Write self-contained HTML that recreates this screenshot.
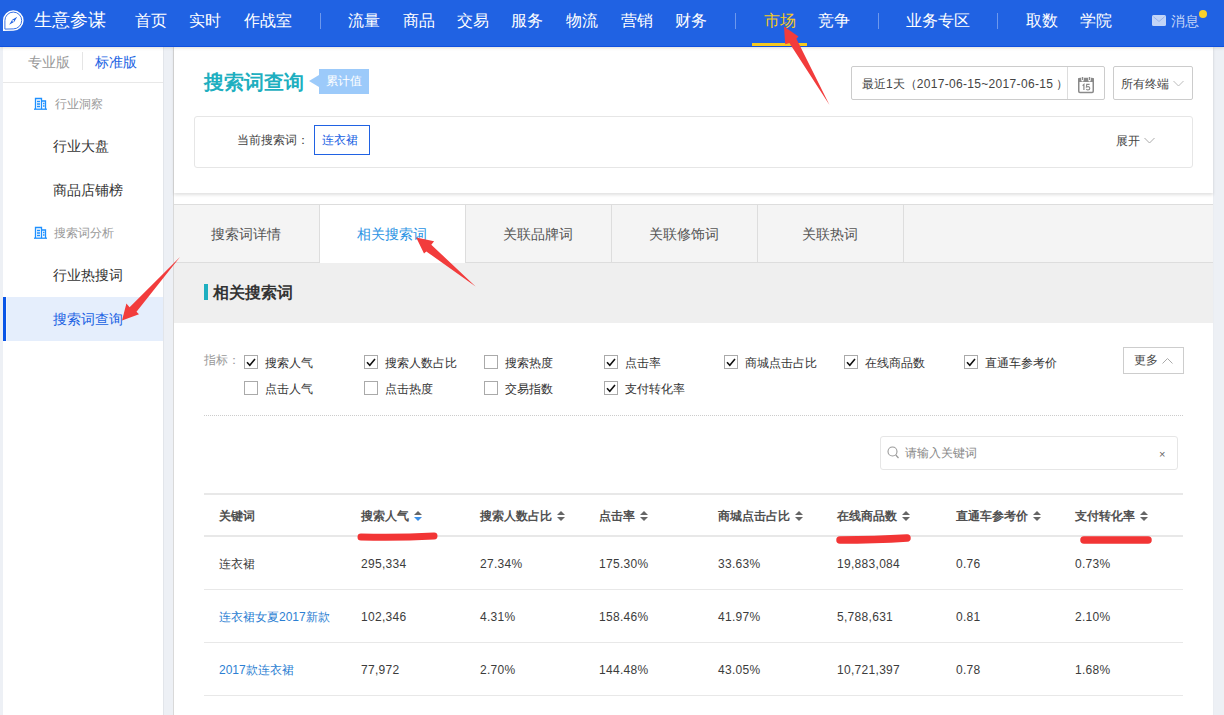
<!DOCTYPE html>
<html><head><meta charset="utf-8">
<style>
*{margin:0;padding:0;box-sizing:border-box}
html,body{width:1224px;height:715px;overflow:hidden;background:#fff;font-family:"Liberation Sans",sans-serif;color:#333}
.abs{position:absolute;z-index:3}
#hdr{position:absolute;left:0;top:0;width:1224px;height:47px;background:#2062e3;border-bottom:1px solid #0f50df;box-shadow:0 1px 3px rgba(80,70,40,.18);z-index:2}
.nav{position:absolute;top:11px;font-size:16px;color:#fff;line-height:20px;white-space:nowrap;font-weight:500;z-index:3}
.sep{position:absolute;top:13px;width:1px;height:16px;background:rgba(255,255,255,.35);z-index:3}
#side{position:absolute;left:0;top:46px;width:163px;height:669px;background:#fff;border-left:3px solid #edf0f5}
#gap{position:absolute;left:163px;top:46px;width:11px;height:669px;background:#edf0f5;border-left:1px solid #e2e5ea;border-right:1px solid #d9d9d9}
#rgap{position:absolute;left:1213px;top:46px;width:11px;height:669px;background:#edf0f5;border-left:1px solid #eaedf2}
.t12{font-size:12px;line-height:14px}
.t14{font-size:14px;line-height:16px}
.cb{position:absolute;width:14px;height:14px;border:1px solid #aaa;background:#fff}
.cb svg{position:absolute;left:-1px;top:-1px}
.cbl{position:absolute;font-size:12px;line-height:14px;color:#333}
.th{position:absolute;top:509px;font-size:12px;line-height:14px;font-weight:bold;color:#505050}
.td{position:absolute;font-size:12px;line-height:14px;color:#3c3c3c;letter-spacing:0.3px}
.sort{display:inline-block;vertical-align:top;margin-left:5px;width:8px;height:10px;position:relative;top:2px}
.sort::before{content:"";position:absolute;left:0;top:0;border:4px solid transparent;border-bottom:4.5px solid #666;border-top:0}
.sort::after{content:"";position:absolute;left:0;bottom:0;border:4px solid transparent;border-top:4.5px solid #666;border-bottom:0}
.sort.blue::after{border-top-color:#3b8fe8}
.hl{position:absolute;height:1px;background:#e8e8e8}
</style></head><body>
<div id="hdr"></div>
<!-- logo -->
<svg class="abs" style="left:0;top:0" width="30" height="40" viewBox="0 0 30 40">
<path d="M3 31 L3 20.5 A10.3 10.3 0 1 1 13.3 30.8 Z" fill="#fff"/>
<path d="M4.9 29.1 L4.9 20.5 A8.4 8.4 0 1 1 13.3 28.9 Z" fill="none" stroke="#2062e3" stroke-width="0.9"/>
<path d="M17.2 16.8 L14.3 21.8 L9.2 24.8 L12.2 19.8 Z" fill="#2062e3"/>
<circle cx="13.2" cy="20.8" r="0.9" fill="#fff"/>
</svg>
<div class="nav" style="left:34px;font-size:18px;top:10px">生意参谋</div>
<div class="nav" style="left:135px">首页</div>
<div class="nav" style="left:189px">实时</div>
<div class="nav" style="left:244px">作战室</div>
<div class="sep" style="left:320px"></div>
<div class="nav" style="left:348px">流量</div>
<div class="nav" style="left:403px">商品</div>
<div class="nav" style="left:457px">交易</div>
<div class="nav" style="left:511px">服务</div>
<div class="nav" style="left:566px">物流</div>
<div class="nav" style="left:621px">营销</div>
<div class="nav" style="left:675px">财务</div>
<div class="sep" style="left:735px"></div>
<div class="nav" style="left:764px;color:#f5c81f">市场</div>
<div class="abs" style="left:752px;top:43px;width:55px;height:3px;background:#f5c81f"></div>
<div class="nav" style="left:818px">竞争</div>
<div class="sep" style="left:878px"></div>
<div class="nav" style="left:906px">业务专区</div>
<div class="sep" style="left:997px"></div>
<div class="nav" style="left:1026px">取数</div>
<div class="nav" style="left:1080px">学院</div>
<svg class="abs" style="left:1152px;top:15px" width="14" height="11" viewBox="0 0 14 11"><rect x="0" y="0" width="14" height="11" rx="1.5" fill="#c2d4f7"/><path d="M1.5 1.8 L7 6.5 L12.5 1.8" fill="none" stroke="#98b3ee" stroke-width="1"/></svg>
<div class="nav" style="left:1171px;font-size:14px;top:11px;color:#c8d8f8">消息</div>
<div class="abs" style="left:1199px;top:10px;width:8px;height:8px;border-radius:50%;background:#f8d12a"></div>

<div id="side"></div>
<div id="gap"></div>
<div id="rgap"></div>

<!-- sidebar -->
<div class="abs t14" style="left:28px;top:54px;color:#999">专业版</div>
<div class="abs" style="left:82px;top:52px;width:1px;height:18px;background:#e5e5e5"></div>
<div class="abs t14" style="left:95px;top:54px;color:#2062e3">标准版</div>
<div class="abs" style="left:3px;top:82px;width:160px;height:1px;background:#e8e8e8"></div>
<div class="abs t12" style="left:55px;top:97px;color:#999">行业洞察</div>
<div class="abs t14" style="left:53px;top:138px;color:#333">行业大盘</div>
<div class="abs t14" style="left:53px;top:182px;color:#333">商品店铺榜</div>
<div class="abs t12" style="left:54px;top:226px;color:#999">搜索词分析</div>
<div class="abs t14" style="left:53px;top:267px;color:#333">行业热搜词</div>
<div class="abs" style="left:3px;top:297px;width:160px;height:44px;background:#e5eefc;border-left:4px solid #f2f6fd"></div><div class="abs" style="left:3px;top:297px;width:3px;height:44px;background:#0a55e6"></div>
<div class="abs t14" style="left:53px;top:311px;color:#2062e3">搜索词查询</div>

<!-- top panel -->
<div class="abs" style="left:174px;top:46px;width:1039px;height:147px;background:#fff;box-shadow:0 2px 3px rgba(0,0,0,.12);z-index:1"></div>
<div class="abs" style="left:204px;top:70px;font-size:20px;line-height:24px;font-weight:bold;color:#1eafc0">搜索词查询</div>
<div class="abs" style="left:309px;top:75px;width:0;height:0;border:6px solid transparent;border-right:10px solid #9ccafa;border-left:0"></div>
<div class="abs t12" style="left:319px;top:69px;width:50px;height:25px;background:#9ccafa;color:#fff;text-align:center;line-height:25px">累计值</div>
<div class="abs" style="left:851px;top:66px;width:254px;height:34px;border:1px solid #ccc;border-radius:2px"></div>
<div class="abs" style="left:1067px;top:67px;width:1px;height:32px;background:#ddd"></div>
<div class="abs t12" style="left:862px;top:77px;color:#444;white-space:nowrap">最近1天（<span style="letter-spacing:0.32px">2017-06-15~2017-06-15</span><span style="margin-left:3px">）</span></div>
<div class="abs" style="left:1113px;top:66px;width:80px;height:34px;border:1px solid #ccc;border-radius:2px"></div>
<div class="abs t12" style="left:1121px;top:77px;color:#444">所有终端</div>
<div class="abs" style="left:194px;top:116px;width:999px;height:52px;border:1px solid #e6e6e6;border-radius:3px"></div>
<div class="abs t12" style="left:237px;top:133px;color:#444">当前搜索词：</div>
<div class="abs t12" style="left:314px;top:125px;width:56px;height:30px;border:1px solid #2062e3;color:#2062e3;text-align:center;line-height:28px;padding-right:4px">连衣裙</div>
<div class="abs t12" style="left:1116px;top:134px;color:#444">展开</div>

<!-- tabs -->
<div class="abs" style="left:174px;top:204px;width:1039px;height:59px;background:#f4f4f4;border-top:1px solid #ddd;border-bottom:1px solid #ddd"></div>
<div class="abs" style="left:319px;top:204px;width:1px;height:59px;background:#ddd"></div>
<div class="abs" style="left:320px;top:205px;width:145px;height:58px;background:#fff"></div>
<div class="abs" style="left:465px;top:204px;width:1px;height:59px;background:#ddd"></div>
<div class="abs" style="left:611px;top:204px;width:1px;height:59px;background:#ddd"></div>
<div class="abs" style="left:757px;top:204px;width:1px;height:59px;background:#ddd"></div>
<div class="abs" style="left:903px;top:204px;width:1px;height:59px;background:#ddd"></div>
<div class="abs t14" style="left:211px;top:226px;color:#555">搜索词详情</div>
<div class="abs t14" style="left:357px;top:226px;color:#2a93e3">相关搜索词</div>
<div class="abs t14" style="left:503px;top:226px;color:#555">关联品牌词</div>
<div class="abs t14" style="left:649px;top:226px;color:#555">关联修饰词</div>
<div class="abs t14" style="left:802px;top:226px;color:#555">关联热词</div>

<div class="abs" style="left:174px;top:263px;width:1039px;height:60px;background:#efefef"></div>
<div class="abs" style="left:204px;top:284px;width:4px;height:16px;background:#1eafc0"></div>
<div class="abs" style="left:213px;top:283px;font-size:16px;line-height:19px;font-weight:bold;color:#333">相关搜索词</div>

<!-- filters -->
<div class="abs t12" style="left:204px;top:353px;color:#999">指标：</div>
<div class="cb" style="left:244px;top:355px"><svg width="14" height="14" viewBox="0 0 14 14"><path d="M3 7.2 L5.8 10.2 L11 4" fill="none" stroke="#111" stroke-width="1.6"/></svg></div><div class="cbl" style="left:265px;top:356px">搜索人气</div>
<div class="cb" style="left:364px;top:355px"><svg width="14" height="14" viewBox="0 0 14 14"><path d="M3 7.2 L5.8 10.2 L11 4" fill="none" stroke="#111" stroke-width="1.6"/></svg></div><div class="cbl" style="left:385px;top:356px">搜索人数占比</div>
<div class="cb" style="left:484px;top:355px"></div><div class="cbl" style="left:505px;top:356px">搜索热度</div>
<div class="cb" style="left:604px;top:355px"><svg width="14" height="14" viewBox="0 0 14 14"><path d="M3 7.2 L5.8 10.2 L11 4" fill="none" stroke="#111" stroke-width="1.6"/></svg></div><div class="cbl" style="left:625px;top:356px">点击率</div>
<div class="cb" style="left:724px;top:355px"><svg width="14" height="14" viewBox="0 0 14 14"><path d="M3 7.2 L5.8 10.2 L11 4" fill="none" stroke="#111" stroke-width="1.6"/></svg></div><div class="cbl" style="left:745px;top:356px">商城点击占比</div>
<div class="cb" style="left:844px;top:355px"><svg width="14" height="14" viewBox="0 0 14 14"><path d="M3 7.2 L5.8 10.2 L11 4" fill="none" stroke="#111" stroke-width="1.6"/></svg></div><div class="cbl" style="left:865px;top:356px">在线商品数</div>
<div class="cb" style="left:964px;top:355px"><svg width="14" height="14" viewBox="0 0 14 14"><path d="M3 7.2 L5.8 10.2 L11 4" fill="none" stroke="#111" stroke-width="1.6"/></svg></div><div class="cbl" style="left:985px;top:356px">直通车参考价</div>
<div class="cb" style="left:244px;top:381px"></div><div class="cbl" style="left:265px;top:382px">点击人气</div>
<div class="cb" style="left:364px;top:381px"></div><div class="cbl" style="left:385px;top:382px">点击热度</div>
<div class="cb" style="left:484px;top:381px"></div><div class="cbl" style="left:505px;top:382px">交易指数</div>
<div class="cb" style="left:604px;top:381px"><svg width="14" height="14" viewBox="0 0 14 14"><path d="M3 7.2 L5.8 10.2 L11 4" fill="none" stroke="#111" stroke-width="1.6"/></svg></div><div class="cbl" style="left:625px;top:382px">支付转化率</div>
<div class="abs t12" style="left:1123px;top:347px;width:61px;height:27px;border:1px solid #cdcdcd;line-height:24px;padding-left:10px;color:#444">更多</div>
<div class="abs" style="left:204px;top:415px;width:979px;height:0;border-top:1px dotted #ccc"></div>

<div class="abs" style="left:880px;top:436px;width:298px;height:34px;border:1px solid #e6e6e6;border-radius:3px"></div>
<div class="abs t12" style="left:905px;top:446px;color:#888">请输入关键词</div>
<div class="abs t12" style="left:1159px;top:447px;color:#666;font-size:11px">×</div>

<!-- table -->
<div class="abs" style="left:204px;top:493px;width:979px;height:2px;background:#e8e8e8"></div>
<div class="abs" style="left:204px;top:535px;width:979px;height:2px;background:#e8e8e8"></div>
<div class="hl" style="left:204px;top:589px;width:979px"></div>
<div class="hl" style="left:204px;top:642px;width:979px"></div>
<div class="hl" style="left:204px;top:695px;width:979px"></div>
<div class="th" style="left:219px">关键词</div>
<div class="th" style="left:361px">搜索人气<span class="sort blue"></span></div>
<div class="th" style="left:480px">搜索人数占比<span class="sort"></span></div>
<div class="th" style="left:599px">点击率<span class="sort"></span></div>
<div class="th" style="left:718px">商城点击占比<span class="sort"></span></div>
<div class="th" style="left:837px">在线商品数<span class="sort"></span></div>
<div class="th" style="left:956px">直通车参考价<span class="sort"></span></div>
<div class="th" style="left:1075px">支付转化率<span class="sort"></span></div>

<div class="td" style="left:219px;top:557px;letter-spacing:0">连衣裙</div>
<div class="td" style="left:361px;top:557px">295,334</div>
<div class="td" style="left:480px;top:557px">27.34%</div>
<div class="td" style="left:599px;top:557px">175.30%</div>
<div class="td" style="left:718px;top:557px">33.63%</div>
<div class="td" style="left:837px;top:557px">19,883,084</div>
<div class="td" style="left:956px;top:557px">0.76</div>
<div class="td" style="left:1075px;top:557px">0.73%</div>

<div class="td" style="left:219px;top:610px;color:#2d7fd3;letter-spacing:0">连衣裙女夏2017新款</div>
<div class="td" style="left:361px;top:610px">102,346</div>
<div class="td" style="left:480px;top:610px">4.31%</div>
<div class="td" style="left:599px;top:610px">158.46%</div>
<div class="td" style="left:718px;top:610px">41.97%</div>
<div class="td" style="left:837px;top:610px">5,788,631</div>
<div class="td" style="left:956px;top:610px">0.81</div>
<div class="td" style="left:1075px;top:610px">2.10%</div>

<div class="td" style="left:219px;top:663px;color:#2d7fd3;letter-spacing:0">2017款连衣裙</div>
<div class="td" style="left:361px;top:663px">77,972</div>
<div class="td" style="left:480px;top:663px">2.70%</div>
<div class="td" style="left:599px;top:663px">144.48%</div>
<div class="td" style="left:718px;top:663px">43.05%</div>
<div class="td" style="left:837px;top:663px">10,721,397</div>
<div class="td" style="left:956px;top:663px">0.78</div>
<div class="td" style="left:1075px;top:663px">1.68%</div>


<!-- icons -->
<svg class="abs" style="left:34px;top:97px" width="14" height="13" viewBox="0 0 14 13"><g fill="none" stroke="#1e90ff" stroke-width="1.3"><path d="M1.5 12 V1.5 H7.5 V12"/><path d="M7.5 4 H11.5 V12"/><path d="M0 12.2 H13"/><path d="M3 4.5 H6 M3 7 H6 M3 9.5 H6 M9 6.5 H10.5 M9 9 H10.5"/></g></svg>
<svg class="abs" style="left:34px;top:226px" width="14" height="13" viewBox="0 0 14 13"><g fill="none" stroke="#1e90ff" stroke-width="1.3"><path d="M1.5 12 V1.5 H7.5 V12"/><path d="M7.5 4 H11.5 V12"/><path d="M0 12.2 H13"/><path d="M3 4.5 H6 M3 7 H6 M3 9.5 H6 M9 6.5 H10.5 M9 9 H10.5"/></g></svg>
<svg class="abs" style="left:1078px;top:77px" width="16" height="17" viewBox="0 0 16 17"><rect x="0.75" y="1.5" width="14.5" height="14" rx="1.2" fill="none" stroke="#8a8a8a" stroke-width="1.5"/><rect x="0" y="1" width="16" height="4" rx="1" fill="#8a8a8a"/><path d="M3.3 1 V3.2 A1.2 1.2 0 0 0 5.7 3.2 V1 Z M10.3 1 V3.2 A1.2 1.2 0 0 0 12.7 3.2 V1 Z" fill="#fff"/><path d="M4.5 0 V3 M11.5 0 V3" stroke="#8a8a8a" stroke-width="1"/><path d="M4.6 8.6 L5.9 7.4 V13" fill="none" stroke="#8a8a8a" stroke-width="1.2"/><path d="M11.6 7.4 H8.7 L8.4 10.1 Q9.4 9.5 10.3 9.6 Q11.8 9.8 11.8 11.3 Q11.8 13 10 13 Q8.9 13 8.3 12.2" fill="none" stroke="#8a8a8a" stroke-width="1.1"/></svg>
<svg class="abs" style="left:1173px;top:80px" width="11" height="8" viewBox="0 0 11 8"><path d="M0.5 1 L5.5 6 L10.5 1" fill="none" stroke="#bbb" stroke-width="1"/></svg>
<svg class="abs" style="left:1144px;top:137px" width="11" height="8" viewBox="0 0 11 8"><path d="M0.5 1 L5.5 6 L10.5 1" fill="none" stroke="#aaa" stroke-width="1"/></svg>
<svg class="abs" style="left:1162px;top:357px" width="11" height="8" viewBox="0 0 11 8"><path d="M0.5 6.5 L5.5 1.5 L10.5 6.5" fill="none" stroke="#aaa" stroke-width="1"/></svg>
<svg class="abs" style="left:887px;top:446px" width="13" height="14" viewBox="0 0 13 14"><circle cx="5.5" cy="5.5" r="4.5" fill="none" stroke="#999" stroke-width="1.1"/><path d="M8.8 9 L11.5 12" stroke="#999" stroke-width="1.2"/></svg>

<!-- red underlines -->
<svg class="abs" style="left:350px;top:528px" width="820" height="20" viewBox="350 528 820 20">
<path d="M361 537 Q398 538 434 536" stroke="#f23535" stroke-width="7" stroke-linecap="round" fill="none"/>
<path d="M840 540 Q875 540 907 538" stroke="#f23535" stroke-width="7.5" stroke-linecap="round" fill="none"/>
<path d="M1084 540 L1148 540" stroke="#f23535" stroke-width="7.5" stroke-linecap="round" fill="none"/>
</svg>
<!-- arrows -->
<svg class="abs" style="left:0;top:0;z-index:10" width="1224" height="715" viewBox="0 0 1224 715">
<g fill="#f23c3c">
<polygon points="784,26.5 798.5,36.6 796.4,38.7 829.5,105 789.4,42.9 785.2,44.3"/>
<polygon points="122,320.5 126.4,303.5 129.6,307.3 180,257 136.5,311.7 139,314.2"/>
<polygon points="416.2,237.4 434.1,241.3 431.3,244.7 475.6,286.6 426.3,251.4 424,253.6"/>
</g>
</svg>
</body></html>
